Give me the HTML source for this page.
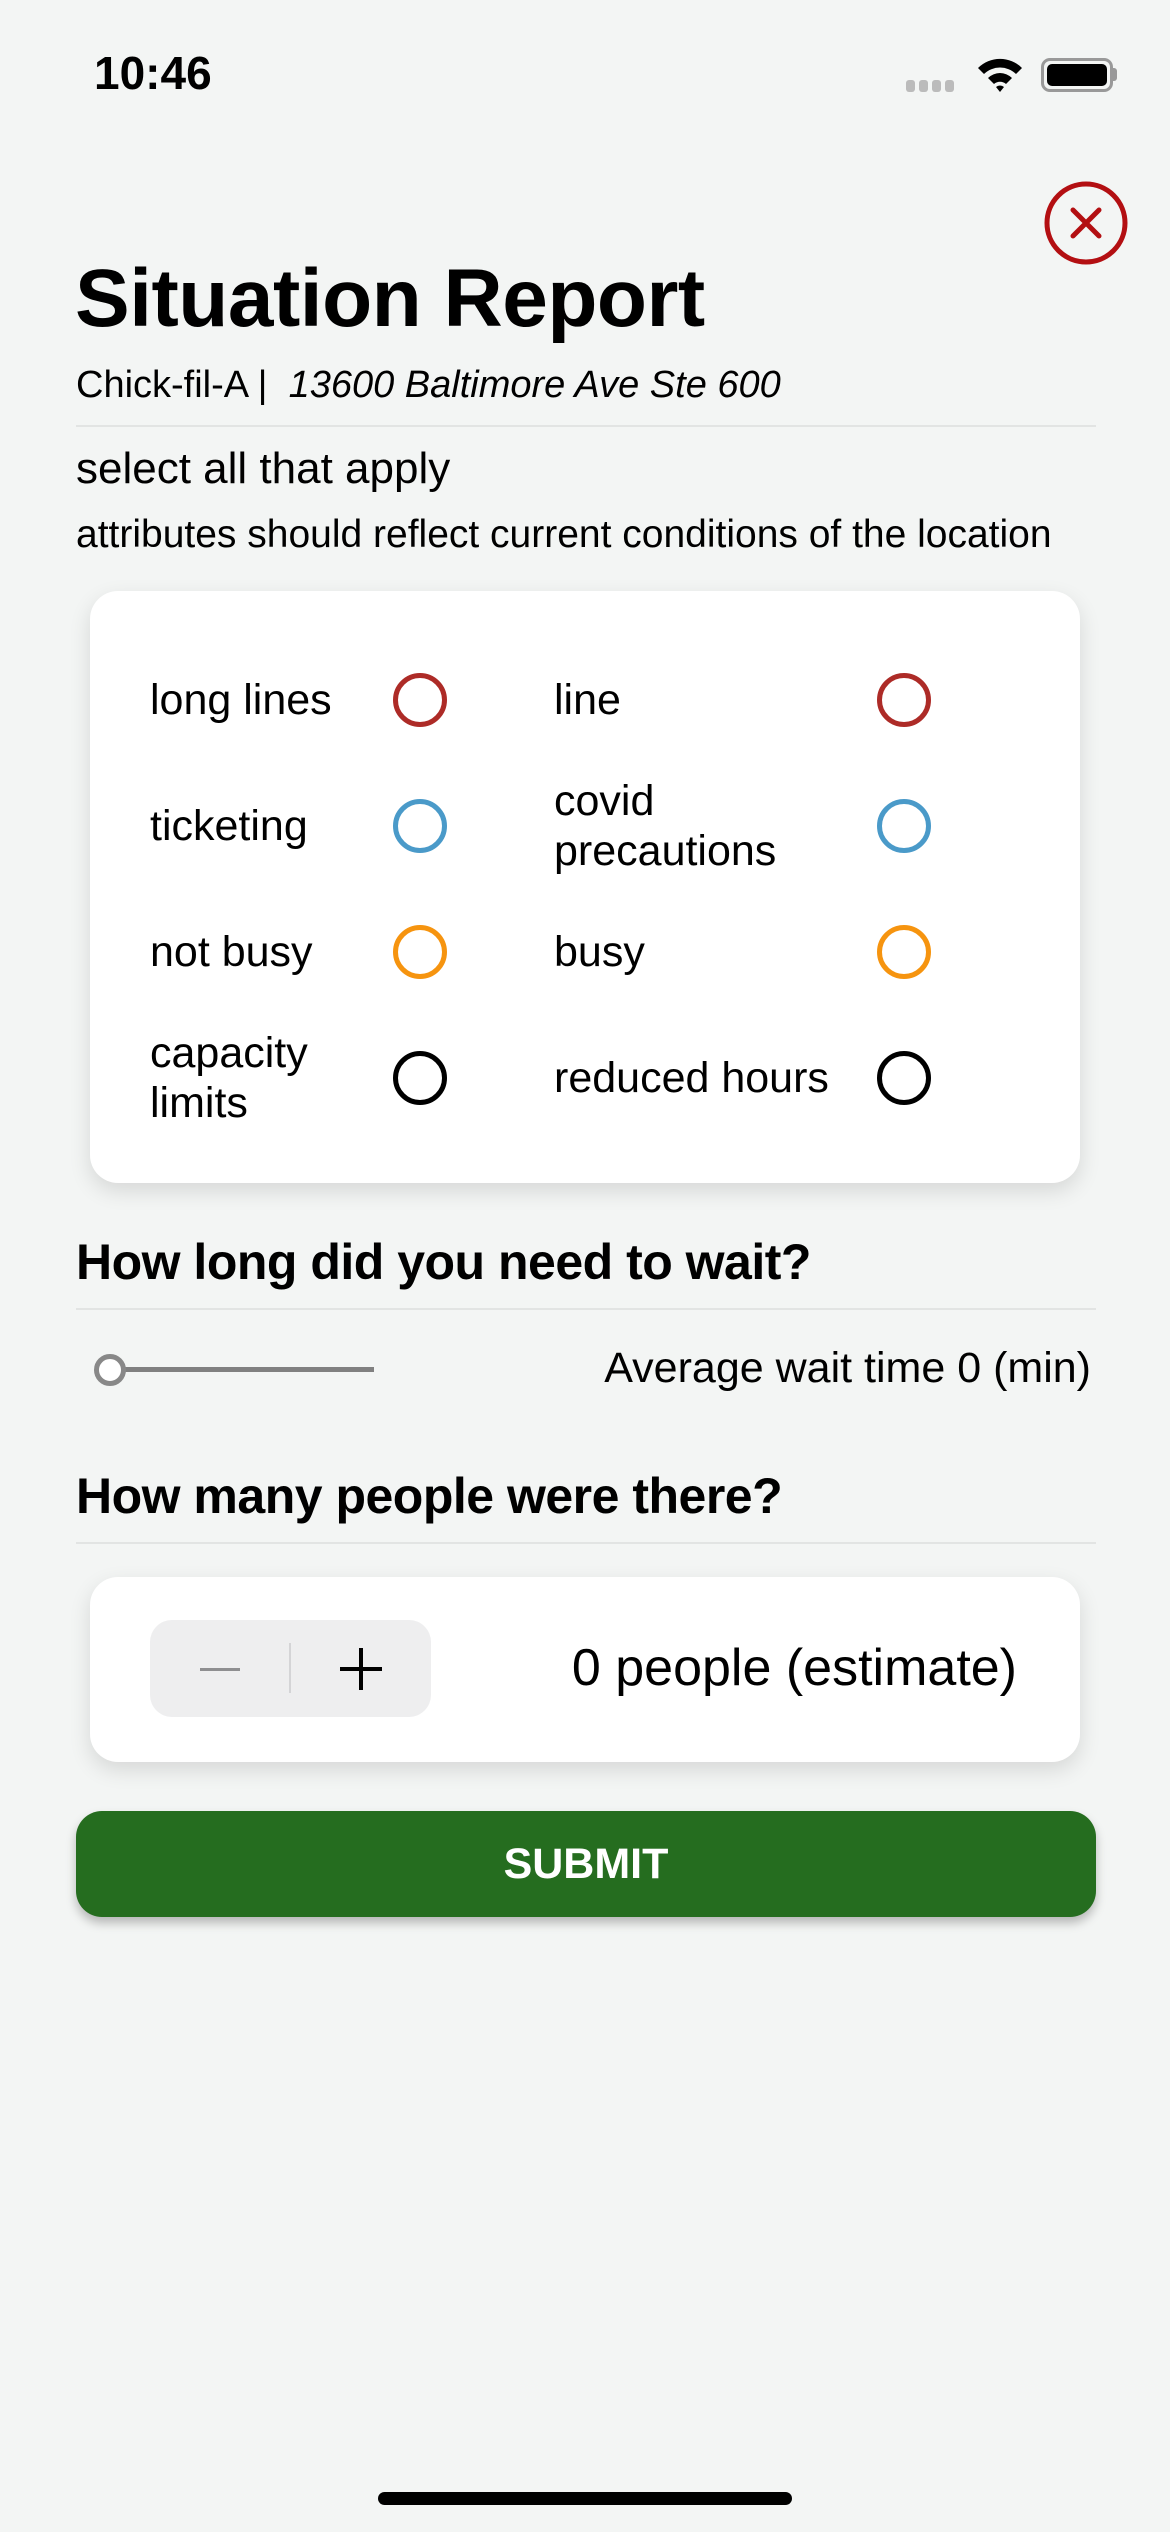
<!DOCTYPE html>
<html><head><meta charset="utf-8"><style>
*{margin:0;padding:0;box-sizing:border-box}
body{width:1170px;height:2532px;background:#f3f5f4;font-family:"Liberation Sans",sans-serif;color:#000;position:relative;overflow:hidden}
.a{position:absolute;white-space:nowrap}
.line{position:absolute;height:2px;background:#e2e4e3;left:76px;width:1020px}
.card{position:absolute;left:90px;width:990px;background:#fff;border-radius:28px;box-shadow:0 8px 22px rgba(0,0,0,0.12)}
.lbl{position:absolute;font-size:43px;line-height:50px;transform:translateY(-50%)}
.ring{position:absolute;width:54px;height:54px;border-radius:50%;border:5px solid;transform:translate(-50%,-50%)}
</style></head><body>
<div class="a" style="left:94px;top:46px;font-size:46px;font-weight:bold">10:46</div>
<div class="a" style="left:906px;top:80px;width:50px;height:12px">
 <div style="position:absolute;left:0;top:0;width:9px;height:12px;background:#bbb;border-radius:3px"></div>
 <div style="position:absolute;left:13px;top:0;width:9px;height:12px;background:#bbb;border-radius:3px"></div>
 <div style="position:absolute;left:26px;top:0;width:9px;height:12px;background:#bbb;border-radius:3px"></div>
 <div style="position:absolute;left:39px;top:0;width:9px;height:12px;background:#bbb;border-radius:3px"></div>
</div>
<svg class="a" style="left:974px;top:54px" width="52" height="40" viewBox="0 0 52 40"><path d="M4 14 A31 31 0 0 1 48 14 L42 20 A23 23 0 0 0 10 20Z M14 24 A17 17 0 0 1 38 24 L32 30 A9 9 0 0 0 20 30Z M26 38 L22 33 A6 6 0 0 1 30 33Z" fill="#000"/></svg>
<div class="a" style="left:1041px;top:58px;width:72px;height:34px;border:3px solid #999;border-radius:9px"><div style="position:absolute;left:3px;top:3px;right:3px;bottom:3px;background:#000;border-radius:5px"></div></div>
<div class="a" style="left:1113px;top:68px;width:4px;height:13px;background:#999;border-radius:0 3px 3px 0"></div>

<svg class="a" style="left:1043px;top:180px" width="86" height="86" viewBox="0 0 86 86"><circle cx="43" cy="43" r="39" fill="none" stroke="#b30f12" stroke-width="5"/><path d="M30 30 L56 56 M56 30 L30 56" stroke="#b30f12" stroke-width="5" stroke-linecap="round"/></svg>

<div class="a" style="left:75px;top:252px;font-size:82px;font-weight:bold;letter-spacing:-0.5px">Situation Report</div>
<div class="a" style="left:76px;top:364px;font-size:38px">Chick-fil-A |&nbsp; <i>13600 Baltimore Ave Ste 600</i></div>
<div class="line" style="top:425px"></div>
<div class="a" style="left:76px;top:444px;font-size:44px">select all that apply</div>
<div class="a" style="left:76px;top:513px;font-size:39px">attributes should reflect current conditions of the location</div>

<div class="card" style="top:591px;height:592px"></div>
<div class="lbl" style="left:150px;top:700px">long lines</div>
<div class="ring" style="left:420px;top:700px;border-color:#ad2b27"></div>
<div class="lbl" style="left:554px;top:700px">line</div>
<div class="ring" style="left:904px;top:700px;border-color:#ad2b27"></div>
<div class="lbl" style="left:150px;top:826px">ticketing</div>
<div class="ring" style="left:420px;top:826px;border-color:#4a9ac9"></div>
<div class="lbl" style="left:554px;top:826px">covid<br>precautions</div>
<div class="ring" style="left:904px;top:826px;border-color:#4a9ac9"></div>
<div class="lbl" style="left:150px;top:952px">not busy</div>
<div class="ring" style="left:420px;top:952px;border-color:#f6940f"></div>
<div class="lbl" style="left:554px;top:952px">busy</div>
<div class="ring" style="left:904px;top:952px;border-color:#f6940f"></div>
<div class="lbl" style="left:150px;top:1078px">capacity<br>limits</div>
<div class="ring" style="left:420px;top:1078px;border-color:#000"></div>
<div class="lbl" style="left:554px;top:1078px">reduced hours</div>
<div class="ring" style="left:904px;top:1078px;border-color:#000"></div>

<div class="a" style="left:76px;top:1233px;font-size:50px;font-weight:bold;letter-spacing:-0.5px">How long did you need to wait?</div>
<div class="line" style="top:1308px"></div>
<div class="a" style="left:110px;top:1367px;width:264px;height:5px;background:#808080"></div>
<div class="a" style="left:94px;top:1354px;width:32px;height:32px;border-radius:50%;border:5px solid #888;background:#fff"></div>
<div class="a" style="right:79px;top:1344px;font-size:43px">Average wait time 0 (min)</div>

<div class="a" style="left:76px;top:1467px;font-size:50px;font-weight:bold;letter-spacing:-0.5px">How many people were there?</div>
<div class="line" style="top:1542px"></div>

<div class="card" style="top:1577px;height:185px"></div>
<div class="a" style="left:150px;top:1620px;width:281px;height:97px;background:#eeeeef;border-radius:22px"></div>
<div class="a" style="left:289px;top:1643px;width:2px;height:50px;background:#d4d4d6"></div>
<div class="a" style="left:200px;top:1668px;width:40px;height:3px;background:#8e8e90"></div>
<div class="a" style="left:340px;top:1667px;width:42px;height:4px;background:#000"></div>
<div class="a" style="left:359px;top:1648px;width:4px;height:42px;background:#000"></div>
<div class="a" style="right:153px;top:1638px;font-size:52px">0 people (estimate)</div>

<div class="a" style="left:76px;top:1811px;width:1020px;height:106px;background:#256d1f;border-radius:26px;box-shadow:0 6px 10px rgba(0,0,0,0.25);color:#fff;font-size:43px;font-weight:bold;text-align:center;line-height:106px">SUBMIT</div>

<div class="a" style="left:378px;top:2492px;width:414px;height:13px;background:#000;border-radius:7px"></div>
</body></html>
